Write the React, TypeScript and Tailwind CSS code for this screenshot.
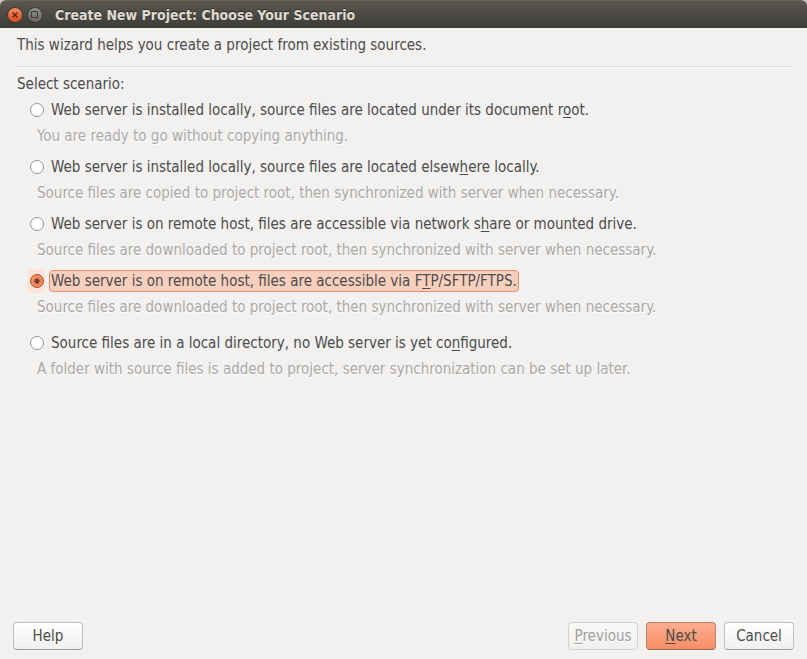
import React, { useState } from "react";

type Scenario = { id: string; label: [string, string, string]; hint: string };

const scenarios: Scenario[] = [
  {
    id: "root",
    label: ["Web server is installed locally, source files are located under its document r", "o", "ot."],
    hint: "You are ready to go without copying anything.",
  },
  {
    id: "elsewhere",
    label: ["Web server is installed locally, source files are located elsew", "h", "ere locally."],
    hint: "Source files are copied to project root, then synchronized with server when necessary.",
  },
  {
    id: "share",
    label: ["Web server is on remote host, files are accessible via network s", "h", "are or mounted drive."],
    hint: "Source files are downloaded to project root, then synchronized with server when necessary.",
  },
  {
    id: "ftp",
    label: ["Web server is on remote host, files are accessible via F", "T", "P/SFTP/FTPS."],
    hint: "Source files are downloaded to project root, then synchronized with server when necessary.",
  },
  {
    id: "local",
    label: ["Source files are in a local directory, no Web server is yet co", "n", "figured."],
    hint: "A folder with source files is added to project, server synchronization can be set up later.",
  },
];

function TitleBar() {
  return (
    <header className="flex h-7 items-center rounded-t-md border-t border-[#66645b] bg-linear-to-b from-[#5a584f] to-[#3d3c38] pl-[7px] text-[#dfdbd2]">
      <button type="button" aria-label="Close" className="size-4 shrink-0">
        <svg viewBox="0 0 16 16" className="size-4">
          <defs>
            <linearGradient id="close" x1="0" y1="0" x2="0" y2="1">
              <stop offset="0" stopColor="#f68f69" />
              <stop offset="1" stopColor="#df4a16" />
            </linearGradient>
          </defs>
          <circle cx="8" cy="8" r="7.5" fill="url(#close)" stroke="#393832" />
          <path d="M5.5 5.5l5 5m0-5l-5 5" stroke="#53291a" strokeWidth="1.3" />
        </svg>
      </button>
      <button type="button" aria-label="Maximize" className="ml-1 size-4 shrink-0">
        <svg viewBox="0 0 16 16" className="size-4">
          <defs>
            <linearGradient id="maximize" x1="0" y1="0" x2="0" y2="1">
              <stop offset="0" stopColor="#92918a" />
              <stop offset="1" stopColor="#66645d" />
            </linearGradient>
          </defs>
          <circle cx="8" cy="8" r="7.5" fill="url(#maximize)" stroke="#393832" />
          <path d="M4.5 4.5h6v6h-6z" fill="none" stroke="#3c3b37" />
        </svg>
      </button>
      <h1 className="ml-3 text-sm font-bold [text-shadow:0_-1px_0_#2e2d2a]">Create New Project: Choose Your Scenario</h1>
    </header>
  );
}

export default function App() {
  const [selected, setSelected] = useState("ftp");
  return (
    <div className="bg-[#c9c7c5]">
      <div className="flex min-h-screen flex-col rounded-t-md bg-[#f2f1f0] font-['DejaVu_Sans_Condensed','DejaVu_Sans',sans-serif] text-[15px] leading-6 text-[#4c4c4c]">
        <TitleBar />
        <main className="grow pt-[5px] pr-[15px] pl-[17px]">
          <p>This wizard helps you create a project from existing sources.</p>
          <hr className="mt-[9px] h-0.5 border-t border-[#dcdad8] bg-[#fafafa]" />
          <fieldset className="mt-1">
            <legend>Select scenario:</legend>
            <div className="mt-0.5 space-y-[7px] pl-2.5">
              {scenarios.map((s) => (
                <div key={s.id} className="last:pt-[5px]">
                  <label className="flex w-fit items-center gap-1">
                    <span className={`flex h-6 w-[18px] items-center justify-end pr-px ${selected === s.id ? "bg-[#fce4da]" : ""}`}>
                      <input
                        type="radio"
                        name="scenario"
                        aria-describedby={`${s.id}-hint`}
                        checked={selected === s.id}
                        onChange={() => setSelected(s.id)}
                        className="size-3.5 appearance-none rounded-full border border-[#98948f] bg-white checked:border-[#ad502a] checked:bg-[radial-gradient(circle,#6d3a25_0,#6d3a25_2px,#f68b62_3px,#ec7148_4px,#f9a382_5px,#ec7148_6px)]"
                      />
                    </span>
                    <span
                      className={`rounded border px-px leading-5 ${selected === s.id ? "border-[#f08c66] bg-[#f9d0be]" : "border-transparent"}`}
                    >
                      {s.label[0]}
                      <span className="underline underline-offset-2">{s.label[1]}</span>
                      {s.label[2]}
                    </span>
                  </label>
                  <p id={`${s.id}-hint`} className="mt-0.5 pl-2.5 text-[#aba8a5] [text-shadow:0_1px_0_#fff]">
                    {s.hint}
                  </p>
                </div>
              ))}
            </div>
          </fieldset>
        </main>
        <footer className="flex gap-2 px-[13px] pt-4 pb-[9px] leading-5">
          <button
            type="button"
            className="mr-auto h-7 w-[70px] rounded border border-[#c3bfbb] border-b-[#a29e9a] bg-linear-to-b from-white to-[#f1f0ef]"
          >
            Help
          </button>
          <button
            type="button"
            disabled
            className="h-7 w-[70px] rounded border border-[#d3d0cd] bg-linear-to-b from-[#f8f8f7] to-[#f1f0ef] text-[#a09d9a] [text-shadow:0_1px_0_#fff]"
          >
            <span className="underline underline-offset-2">P</span>revious
          </button>
          <button
            type="button"
            className="h-7 w-[70px] rounded border border-[#b7826d] border-b-[#96695a] bg-linear-to-b from-[#ffad90] to-[#f48e65]"
          >
            <span className="underline underline-offset-2">N</span>ext
          </button>
          <button
            type="button"
            className="h-7 w-[70px] rounded border border-[#c3bfbb] border-b-[#a29e9a] bg-linear-to-b from-white to-[#f1f0ef]"
          >
            Cancel
          </button>
        </footer>
      </div>
    </div>
  );
}
